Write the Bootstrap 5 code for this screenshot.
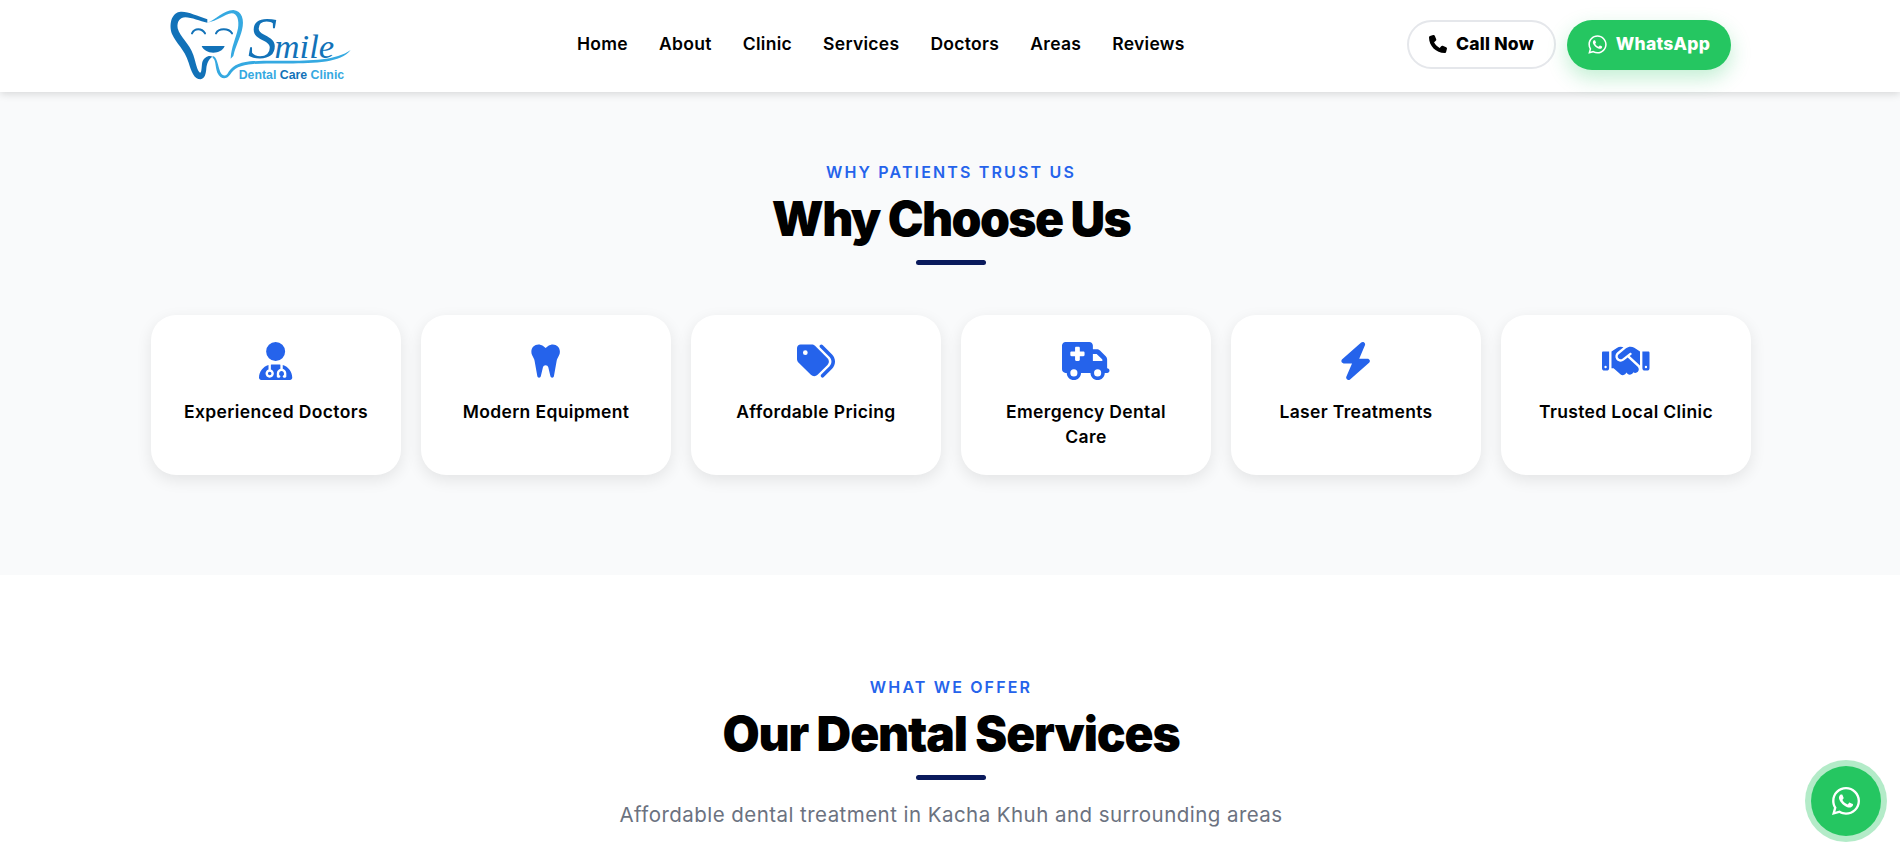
<!DOCTYPE html>
<html lang="en">
<head>
<meta charset="utf-8">
<title>Smile Dental Care Clinic</title>
<link href="https://cdn.jsdelivr.net/npm/bootstrap@5.3.0/dist/css/bootstrap.min.css" rel="stylesheet">
<style>
body{font-family:"Inter","Liberation Sans",sans-serif;color:#000;background:#fff;overflow-x:hidden}
.site-head{height:92px;background:#fff;box-shadow:0 2px 8px rgba(0,0,0,.14);position:relative;z-index:2;padding:0 169px 3px 150px}
.logo-box{display:block;width:230px;height:92px;align-self:flex-start}
.logo-box svg{display:block}
.main-links{gap:31px;margin-left:197px;padding-bottom:2px}
.main-links a{color:#000;text-decoration:none;font-size:17.5px;font-weight:600;line-height:1;letter-spacing:.3px}
.pill-call,.pill-wa{display:flex;align-items:center;justify-content:center;gap:9px;border-radius:25px;font-size:17.5px;font-weight:800;letter-spacing:.25px}
.pill-call{width:149px;height:49px;border:2px solid #e5e7eb;background:#fff;color:#000}
.pill-wa{width:164px;height:50px;background:#25c661;color:#fff;border:0;box-shadow:0 8px 20px rgba(37,198,97,.28)}
.pill-call svg{width:18px;height:18px;fill:currentColor}
.pill-wa svg{width:19px;height:21px;fill:currentColor}
.sect-grey{background:#f9fafb;height:483px;padding:70px 0 0 2px}
.sect-white{background:#fff;height:288px;padding:102px 0 0 2px}
.eyebrow{color:#2563eb;font-size:16px;font-weight:600;letter-spacing:2.15px;line-height:20px;text-align:center}
.big-title{font-size:48px;font-weight:900;line-height:64px;letter-spacing:-1.6px;text-align:center;margin:5px 0 0;color:#000}
.sect-white .big-title{letter-spacing:-1.15px}
.title-bar{width:70px;height:5px;border-radius:3px;background:#0a1a5c;margin:9px auto 0}
.why-grid{display:flex;gap:20px;width:1600px;margin:50px auto 0}
.why-item{width:250px;height:160px;border:0;border-radius:25px;background:#fff;box-shadow:0 5px 16px rgba(0,0,0,.09);padding:27px 30px 0;text-align:center;align-items:center}
.why-item svg{height:38px;fill:#2563eb;display:block}
.why-item h3{font-size:17.5px;font-weight:600;line-height:25px;margin:19px 0 0;color:#000;letter-spacing:.35px}
.sub-line{color:#6b7280;font-size:20.5px;line-height:30px;text-align:center;margin:20px 0 0;letter-spacing:.45px}
.float-wa{position:fixed;right:19px;bottom:27px;width:70px;height:70px;border-radius:50%;background:#25c661;box-shadow:0 0 0 6px rgba(37,198,97,.35);display:flex;align-items:center;justify-content:center;z-index:5}
.float-wa svg{width:28px;height:32px;fill:#fff}
</style>
</head>
<body>
<header class="site-head d-flex align-items-center">
  <a class="logo-box" href="#" aria-label="Smile Dental Care Clinic">
    <svg width="230" height="92" viewBox="0 0 690 276" xmlns="http://www.w3.org/2000/svg">
      <path fill="#1272b8" d="M172 58C140 48 110 32 88 36C64 40 56 75 66 102C78 130 104 148 116 188C124 214 132 238 152 238C164 236 168 222 169 205C171 190 176 176 188 170C176 164 162 172 157 186C154 200 156 218 150 218C142 214 138 190 130 165C118 130 90 112 83 85C80 65 90 52 106 52C125 52 150 64 172 68Z"/>
      <path fill="#35a9e1" d="M172 68C195 62 220 30 250 30C276 32 284 60 276 90C270 115 258 135 250 168L242 176C244 140 258 115 264 85C268 62 262 40 245 40C225 42 200 64 172 68Z"/>
      <path fill="#35a9e1" d="M188 168C200 170 203 190 208 208C212 225 222 232 232 222C245 200 262 188 300 184C400 178 540 195 602 150C560 205 420 185 310 192C270 195 252 205 240 224C228 240 212 238 202 218C195 200 198 178 188 174Z"/>
      <path fill="none" stroke="#1272b8" stroke-width="6" stroke-linecap="round" d="M126 100C134 84 155 84 165 100M198 100C206 84 236 84 246 100"/>
      <path fill="#1272b8" d="M155 138H224C218 152 205 158 190 158C173 158 160 150 155 138Z"/>
      <text x="294" y="174" fill="#1272b8" font-family="Liberation Serif" font-style="italic" font-size="175">S<tspan font-size="104" dx="-8">mile</tspan></text>
      <text x="266" y="236" fill="#35a9e1" font-family="Liberation Sans" font-weight="700" font-size="37">Dental <tspan fill="#1272b8">Care</tspan> Clinic</text>
    </svg>
  </a>
  <nav class="nav main-links">
    <a href="#">Home</a><a href="#">About</a><a href="#">Clinic</a><a href="#">Services</a><a href="#">Doctors</a><a href="#">Areas</a><a href="#">Reviews</a>
  </nav>
  <div class="d-flex ms-auto" style="gap:11px">
    <a class="btn pill-call" href="#"><svg viewBox="0 0 512 512"><path d="M164.9 24.6c-7.7-18.6-28-28.5-47.4-23.2l-88 24C12.1 30.2 0 46 0 64C0 311.4 200.6 512 448 512c18 0 33.8-12.1 38.6-29.5l24-88c5.3-19.4-4.6-39.7-23.2-47.4l-96-40c-16.3-6.8-35.2-2.1-46.3 11.6L304.7 368C234.3 334.7 177.3 277.7 144 207.3L193.3 167c13.7-11.2 18.4-30 11.6-46.3l-40-96z"/></svg>Call Now</a>
    <a class="btn pill-wa" href="#"><svg viewBox="0 0 448 512"><path d="M380.9 97.1C339 55.1 283.2 32 223.9 32c-122.4 0-222 99.6-222 222 0 39.1 10.2 77.3 29.6 111L0 480l117.7-30.9c32.4 17.7 68.9 27 106.1 27h.1c122.3 0 224.1-99.6 224.1-222 0-59.3-25.2-115-67.1-157zm-157 341.6c-33.2 0-65.7-8.9-94-25.7l-6.7-4-69.8 18.3L72 359.2l-4.4-7c-18.5-29.4-28.2-63.3-28.2-98.2 0-101.7 82.8-184.5 184.6-184.5 49.3 0 95.6 19.2 130.4 54.1 34.8 34.9 56.2 81.2 56.1 130.5 0 101.8-84.9 184.6-186.6 184.6zm101.2-138.2c-5.5-2.8-32.8-16.2-37.9-18-5.1-1.9-8.8-2.8-12.5 2.8-3.7 5.6-14.3 18-17.6 21.8-3.2 3.7-6.5 4.2-12 1.4-32.6-16.3-54-29.1-75.5-66-5.7-9.8 5.7-9.1 16.3-30.3 1.8-3.7 .9-6.9-.5-9.7-1.4-2.8-12.5-30.1-17.1-41.2-4.5-10.8-9.1-9.3-12.5-9.5-3.2-.2-6.9-.2-10.6-.2-3.7 0-9.7 1.4-14.8 6.9-5.1 5.6-19.4 19-19.4 46.3 0 27.3 19.9 53.7 22.6 57.4 2.8 3.7 39.1 59.7 94.8 83.8 35.2 15.2 49 16.5 66.6 13.9 10.7-1.6 32.8-13.4 37.4-26.4 4.6-13 4.6-24.1 3.2-26.4-1.3-2.5-5-3.9-10.5-6.6z"/></svg>WhatsApp</a>
  </div>
</header>

<section class="sect-grey">
  <div class="eyebrow">WHY PATIENTS TRUST US</div>
  <h2 class="big-title">Why Choose Us</h2>
  <div class="title-bar"></div>
  <div class="why-grid">
    <div class="card why-item"><svg viewBox="0 0 448 512"><path d="M224 256A128 128 0 1 0 224 0a128 128 0 1 0 0 256zm-96 55.2C54 332.9 0 401.3 0 482.3C0 498.7 13.3 512 29.7 512H418.3c16.4 0 29.7-13.3 29.7-29.7c0-81-54-149.4-128-171.1V362c27.6 7.1 48 32.2 48 62v40c0 8.8-7.2 16-16 16H336c-8.8 0-16-7.2-16-16s7.2-16 16-16V424c0-17.7-14.3-32-32-32s-32 14.3-32 32v24c8.8 0 16 7.2 16 16s-7.2 16-16 16H256c-8.8 0-16-7.2-16-16V424c0-29.8 20.4-54.9 48-62V304.9c-6-.6-12.1-.9-18.3-.9H178.3c-6.2 0-12.3 .3-18.3 .9v65.4c23.1 6.9 40 28.3 40 53.7c0 30.9-25.1 56-56 56s-56-25.1-56-56c0-25.4 16.9-46.8 40-53.7V311.2zM144 448a24 24 0 1 0 0-48 24 24 0 1 0 0 48z"/></svg><h3>Experienced Doctors</h3></div>
    <div class="card why-item"><svg viewBox="0 0 448 512"><path d="M186.1 52.1C169.3 39.1 148.7 32 127.5 32C74.7 32 32 74.7 32 127.5v6.2c0 15.8 3.7 31.3 10.7 45.5l23.5 47.1c4.5 8.9 7.6 18.4 9.4 28.2l36.7 205.8c2 11.2 11.6 19.4 22.9 19.8s21.4-7.4 24-18.4l28.9-121.3C192.2 323.7 207 312 224 312s31.8 11.7 35.8 28.3l28.9 121.3c2.6 11.1 12.7 18.8 24 18.4s20.9-8.6 22.9-19.8l36.7-205.8c1.8-9.8 4.9-19.3 9.4-28.2l23.5-47.1c7.1-14.1 10.7-29.7 10.7-45.5v-6.2C416 74.7 373.3 32 320.5 32c-21.2 0-41.8 7.1-58.6 20.1L224 81.5 186.1 52.1z"/></svg><h3>Modern Equipment</h3></div>
    <div class="card why-item"><svg viewBox="0 0 512 512"><path d="M345 39.1L472.8 168.4c52.4 53 52.4 138.2 0 191.2L360.8 472.9c-9.3 9.4-24.5 9.5-33.9 .2s-9.5-24.5-.2-33.9L438.6 325.9c33.9-34.3 33.9-89.4 0-123.7L310.9 72.9c-9.3-9.4-9.2-24.6 .2-33.9s24.6-9.2 33.9 .2zM0 229.5V80C0 53.5 21.5 32 48 32H197.5c17 0 33.3 6.7 45.3 18.7l168 168c25 25 25 65.5 0 90.5L277.3 442.7c-25 25-65.5 25-90.5 0l-168-168C6.7 262.7 0 246.5 0 229.5zM144 144a32 32 0 1 0 -64 0 32 32 0 1 0 64 0z"/></svg><h3>Affordable Pricing</h3></div>
    <div class="card why-item"><svg viewBox="0 0 640 512"><path d="M0 48C0 21.5 21.5 0 48 0H368c26.5 0 48 21.5 48 48V96h50.7c17 0 33.3 6.7 45.3 18.7L589.3 192c12 12 18.7 28.3 18.7 45.3V256v32 64c17.7 0 32 14.3 32 32s-14.3 32-32 32H576c0 53-43 96-96 96s-96-43-96-96H256c0 53-43 96-96 96s-96-43-96-96H48c-26.5 0-48-21.5-48-48V48zM416 256H544V237.3L466.7 160H416v96zM160 464a48 48 0 1 0 0-96 48 48 0 1 0 0 96zm368-48a48 48 0 1 0 -96 0 48 48 0 1 0 96 0zM176 80v48l-48 0c-8.8 0-16 7.2-16 16v32c0 8.8 7.2 16 16 16h48v48c0 8.8 7.2 16 16 16h32c8.8 0 16-7.2 16-16V192h48c8.8 0 16-7.2 16-16V144c0-8.8-7.2-16-16-16H240V80c0-8.8-7.2-16-16-16H192c-8.8 0-16 7.2-16 16z"/></svg><h3>Emergency Dental Care</h3></div>
    <div class="card why-item"><svg viewBox="0 0 448 512"><path d="M349.4 44.6c5.9-13.7 1.5-29.7-10.6-38.5s-28.6-8-39.9 1.8l-256 224c-10 8.8-13.6 22.9-8.9 35.3S50.7 288 64 288H175.5L98.6 467.4c-5.9 13.7-1.5 29.7 10.6 38.5s28.6 8 39.9-1.8l256-224c10-8.8 13.6-22.9 8.9-35.3s-16.6-20.7-30-20.7H272.5L349.4 44.6z"/></svg><h3>Laser Treatments</h3></div>
    <div class="card why-item"><svg viewBox="0 0 640 512"><path d="M323.4 85.2l-96.8 78.4c-16.1 13-19.2 36.4-7 53.1c12.9 17.8 38 21.3 55.3 7.8l99.3-77.2c7-5.4 17-4.2 22.5 2.8s4.2 17-2.8 22.5l-20.9 16.2L512 316.8V128h-.7l-3.9-2.5L434.8 79c-15.3-9.8-33.2-15-51.4-15c-21.8 0-43 7.5-60 21.2zm22.8 124.4l-51.7 40.2C263 274.4 217.3 268 193.7 235.6c-22.2-30.5-16.6-73.1 12.7-96.8l83.2-67.3c-11.6-4.9-24.1-7.4-36.8-7.4C234 64 215.7 69.6 200 80l-72 48V352h28.2l91.4 83.4c19.6 17.9 49.9 16.5 67.8-3.1c5.5-6.1 9.2-13.2 11.1-20.6l17 15.6c19.5 17.9 49.9 16.6 67.8-2.9c4.5-4.9 7.8-10.6 9.9-16.5c19.4 13 45.8 10.3 62.1-7.5c17.9-19.5 16.6-49.9-2.9-67.8l-134.2-123zM16 128c-8.8 0-16 7.2-16 16V352c0 17.7 14.3 32 32 32H64c17.7 0 32-14.3 32-32V128H16zM48 320a16 16 0 1 1 0 32 16 16 0 1 1 0-32zM544 128V352c0 17.7 14.3 32 32 32h32c17.7 0 32-14.3 32-32V144c0-8.8-7.2-16-16-16H544zm32 208a16 16 0 1 1 32 0 16 16 0 1 1 -32 0z"/></svg><h3>Trusted Local Clinic</h3></div>
  </div>
</section>

<section class="sect-white">
  <div class="eyebrow">WHAT WE OFFER</div>
  <h2 class="big-title">Our Dental Services</h2>
  <div class="title-bar"></div>
  <p class="sub-line">Affordable dental treatment in Kacha Khuh and surrounding areas</p>
</section>

<a class="float-wa" href="#" aria-label="WhatsApp"><svg viewBox="0 0 448 512"><path d="M380.9 97.1C339 55.1 283.2 32 223.9 32c-122.4 0-222 99.6-222 222 0 39.1 10.2 77.3 29.6 111L0 480l117.7-30.9c32.4 17.7 68.9 27 106.1 27h.1c122.3 0 224.1-99.6 224.1-222 0-59.3-25.2-115-67.1-157zm-157 341.6c-33.2 0-65.7-8.9-94-25.7l-6.7-4-69.8 18.3L72 359.2l-4.4-7c-18.5-29.4-28.2-63.3-28.2-98.2 0-101.7 82.8-184.5 184.6-184.5 49.3 0 95.6 19.2 130.4 54.1 34.8 34.9 56.2 81.2 56.1 130.5 0 101.8-84.9 184.6-186.6 184.6zm101.2-138.2c-5.5-2.8-32.8-16.2-37.9-18-5.1-1.9-8.8-2.8-12.5 2.8-3.7 5.6-14.3 18-17.6 21.8-3.2 3.7-6.5 4.2-12 1.4-32.6-16.3-54-29.1-75.5-66-5.7-9.8 5.7-9.1 16.3-30.3 1.8-3.7 .9-6.9-.5-9.7-1.4-2.8-12.5-30.1-17.1-41.2-4.5-10.8-9.1-9.3-12.5-9.5-3.2-.2-6.9-.2-10.6-.2-3.7 0-9.7 1.4-14.8 6.9-5.1 5.6-19.4 19-19.4 46.3 0 27.3 19.9 53.7 22.6 57.4 2.8 3.7 39.1 59.7 94.8 83.8 35.2 15.2 49 16.5 66.6 13.9 10.7-1.6 32.8-13.4 37.4-26.4 4.6-13 4.6-24.1 3.2-26.4-1.3-2.5-5-3.9-10.5-6.6z"/></svg></a>
<script src="https://cdn.jsdelivr.net/npm/bootstrap@5.3.0/dist/js/bootstrap.bundle.min.js"></script>
</body>
</html>
